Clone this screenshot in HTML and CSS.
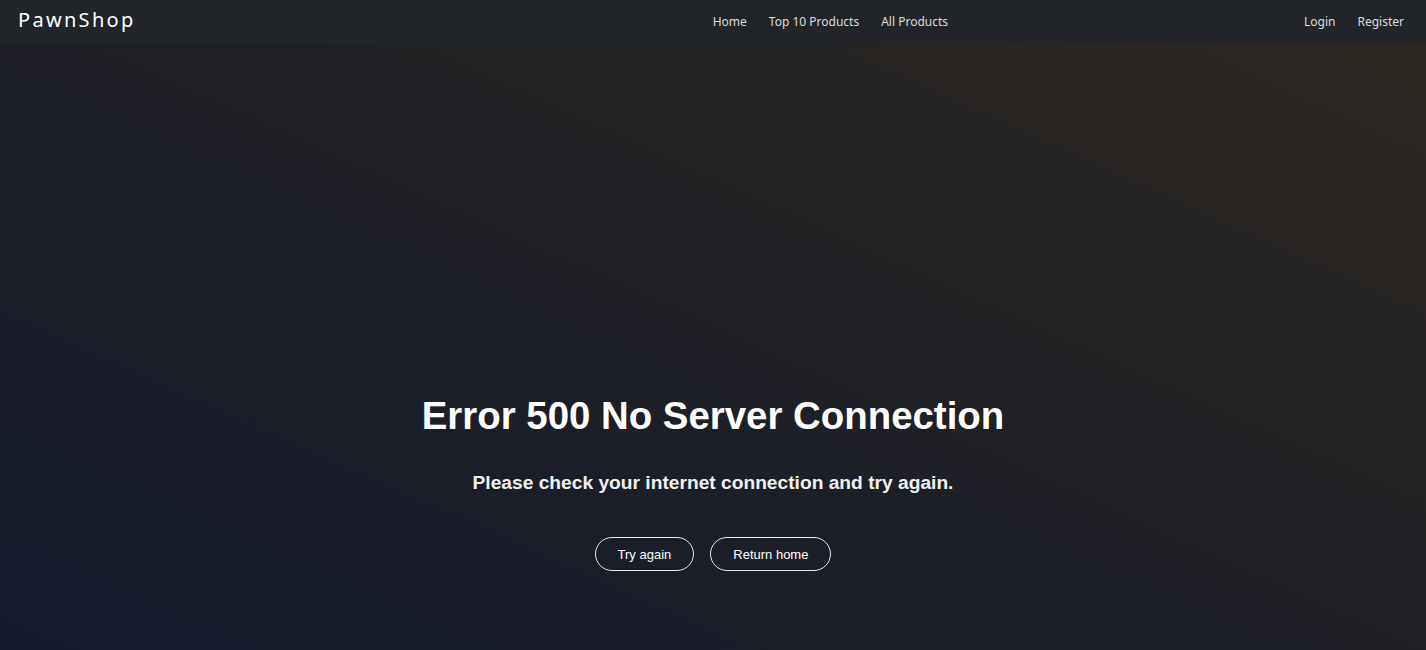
FILE: index.html
```html
<!DOCTYPE html>
<html lang="en">
<head>
<meta charset="utf-8">
<title>PawnShop - Error</title>
<link rel="stylesheet" href="styles.css">
</head>
<body>
<div class="page">
  <nav class="navbar">
    <a class="brand" href="#">PawnShop</a>
    <ul class="nav-links nav-center">
      <li><a href="#">Home</a></li>
      <li><a href="#">Top 10 Products</a></li>
      <li><a href="#">All Products</a></li>
    </ul>
    <ul class="nav-links nav-right">
      <li><a href="#">Login</a></li>
      <li><a href="#">Register</a></li>
    </ul>
  </nav>
  <main class="hero">
    <h1 class="title">Error 500 No Server Connection</h1>
    <p class="subtitle">Please check your internet connection and try again.</p>
    <div class="actions">
      <a class="btn" href="#">Try again</a>
      <a class="btn" href="#">Return home</a>
    </div>
  </main>
</div>
</body>
</html>
```
FILE: styles.css
```css
* { box-sizing: border-box; }
html, body { margin: 0; padding: 0; height: 100%; }
body {
  font-family: "Noto Sans", "Open Sans", sans-serif;
  background: #1d1f25;
  color: #fff;
}
.page {
  height: 650px;
  display: flex;
  flex-direction: column;
  background: linear-gradient(to top right, #141b2c 0%, #1f2026 50%, #2e2820 100%);
}
.navbar {
  height: 43px;
  flex: none;
  background: #212529;
  display: flex;
  align-items: center;
  padding: 0 22px 3px 18px;
}
.brand {
  color: #fff;
  text-decoration: none;
  font-size: 20px;
  letter-spacing: 2.3px;
  line-height: 1;
}
.nav-links {
  list-style: none;
  margin: 0;
  padding: 0;
  display: flex;
  gap: 22px;
}
.nav-links a {
  text-decoration: none;
  color: rgba(255,255,255,0.85);
  font-size: 12px;
}
.nav-center { margin-left: auto; }
.nav-right { margin-left: 356px; }
.hero {
  flex: 1;
  display: flex;
  flex-direction: column;
  align-items: center;
  padding-top: 351px;
  font-family: "Liberation Sans", Arial, sans-serif;
}
.title {
  margin: 0;
  font-size: 38.4px;
  font-weight: 700;
  line-height: 44px;
}
.subtitle {
  margin: 33px 0 0;
  font-size: 19.2px;
  font-weight: 700;
  line-height: 24px;
  color: #f0f0f0;
}
.actions {
  margin-top: 42px;
  display: flex;
  gap: 16px;
}
.btn {
  display: inline-flex;
  align-items: center;
  justify-content: center;
  height: 34px;
  padding: 0 22px;
  border: 1px solid #e8e8e8;
  border-radius: 17px;
  color: #fff;
  text-decoration: none;
  font-size: 13px;
}
```
